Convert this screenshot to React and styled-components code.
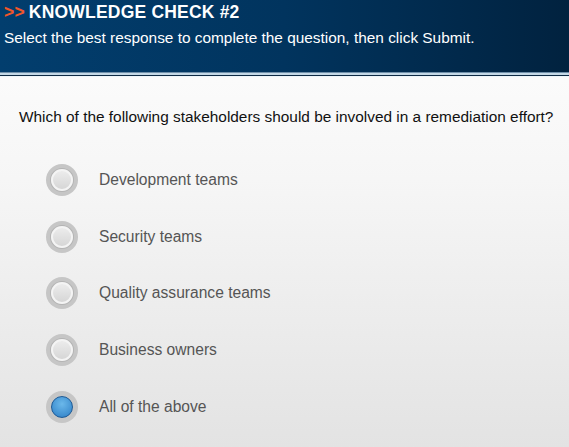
import React, { useState } from "react";
import styled, { createGlobalStyle } from "styled-components";

const GlobalStyle = createGlobalStyle`
  html, body {
    margin: 0;
    padding: 0;
  }
  body {
    font-family: "Liberation Sans", Arial, sans-serif;
    width: 569px;
    height: 447px;
    overflow: hidden;
  }
`;

const Page = styled.div`
  width: 569px;
  height: 447px;
  display: flex;
  flex-direction: column;
  background: linear-gradient(to bottom, #ffffff 0%, #f6f6f6 40%, #e3e3e3 100%);
`;

const Header = styled.header`
  height: 73px;
  box-sizing: border-box;
  padding: 2px 0 0 4px;
  background: linear-gradient(to right, #023e6e 0%, #01345e 50%, #01223f 100%);
  border-bottom: 1px solid #6f8fa9;
  color: #fff;
`;

const HeaderRule = styled.div`
  height: 4px;
  background: linear-gradient(
    to bottom,
    #c4d8e6 0px,
    #c4d8e6 2px,
    #0e2a44 2px,
    #0e2a44 3px,
    #eef6fa 3px
  );
`;

const Title = styled.h1`
  margin: 0;
  font-size: 17.5px;
  font-weight: bold;
  line-height: 20px;
  letter-spacing: 0.2px;

  span {
    color: #f2562a;
    margin-right: 4px;
  }
`;

const Subtitle = styled.p`
  margin: 7px 0 0;
  font-size: 15.4px;
  line-height: 18px;
`;

const Question = styled.p`
  margin: 31px 0 0 19px;
  font-size: 15.4px;
  line-height: 18px;
  color: #111;
`;

const Options = styled.div`
  display: flex;
  flex-direction: column;
  gap: 24.7px;
  margin: 38px 0 0 46px;
`;

const Option = styled.label`
  display: flex;
  align-items: center;
  height: 32px;
  cursor: pointer;
`;

const Radio = styled.span`
  width: 32px;
  height: 32px;
  border-radius: 50%;
  background: #c6c6c6;
  display: flex;
  align-items: center;
  justify-content: center;
  flex-shrink: 0;

  &::after {
    content: "";
    box-sizing: border-box;
    width: 22px;
    height: 22px;
    border-radius: 50%;
    border: ${(p) => (p.$checked ? "1px solid #1d5a96" : "2px solid #f4f4f4")};
    box-shadow: ${(p) => (p.$checked ? "none" : "0 0 0 1px #b4b4b4")};
    background: ${(p) =>
      p.$checked
        ? "radial-gradient(circle at 50% 35%, #6bb8ea 0%, #3f8fd0 70%, #2a72b7 100%)"
        : "linear-gradient(to bottom, #ececec 0%, #d6d6d6 100%)"};
  }
`;

const OptionText = styled.span`
  margin-left: 21px;
  font-size: 15.6px;
  color: #555;
`;

const answers = [
  "Development teams",
  "Security teams",
  "Quality assurance teams",
  "Business owners",
  "All of the above",
];

export default function App() {
  const [selected, setSelected] = useState(4);

  return (
    <>
      <GlobalStyle />
      <Page>
        <Header>
          <Title>
            <span>&gt;&gt;</span>KNOWLEDGE CHECK #2
          </Title>
          <Subtitle>
            Select the best response to complete the question, then click Submit.
          </Subtitle>
        </Header>
        <HeaderRule />
        <Question>
          Which of the following stakeholders should be involved in a remediation effort?
        </Question>
        <Options>
          {answers.map((a, i) => (
            <Option key={a} onClick={() => setSelected(i)}>
              <Radio $checked={selected === i} />
              <OptionText>{a}</OptionText>
            </Option>
          ))}
        </Options>
      </Page>
    </>
  );
}
